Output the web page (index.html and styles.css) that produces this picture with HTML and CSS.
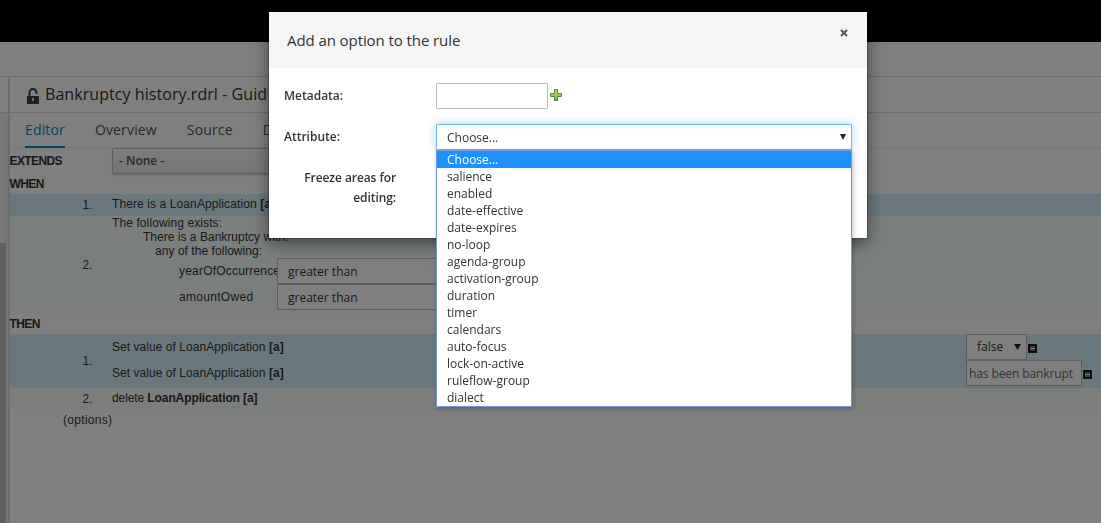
FILE: index.html
```html
<!DOCTYPE html>
<html lang="en">
<head>
<meta charset="utf-8">
<title>Guided rule editor</title>
<link rel="stylesheet" href="styles.css">
</head>
<body>
<div class="app">
  <header class="topbar"></header>
  <div class="toolbar"></div>
  <div class="workspace">
    <aside class="sidebar">
      <div class="side-head"><svg class="side-arrow" width="4" height="4" viewBox="0 0 4 4"><path d="M0 0L4 4H0z" fill="#222"/></svg></div>
      <div class="track"><div class="thumb"></div></div>
    </aside>
    <main class="main">
      <div class="doc-title">
        <svg class="lock" width="12" height="16" viewBox="0 0 12 16"><path d="M2.500 8V4.500a3.500 3.500 0 0 1 7 0V6" fill="none" stroke="#404040" stroke-width="2"/><path d="M0 8h12v8H0z" fill="#404040"/><path d="M5 10h2v3H5z" fill="#ddd"/></svg>
        <span class="doc-name">Bankruptcy history.rdrl - Guid</span>
      </div>
      <nav class="tabs"><span class="tab active">Editor</span><span class="tab">Overview</span><span class="tab">Source</span><span class="tab">D</span></nav>
      <div class="extends"><b class="section">EXTENDS</b><div class="select none">- None -</div></div>
      <div class="section when">WHEN</div>
      <div class="row blue one"><span class="num">1.</span><span class="text">There is a LoanApplication <b>[a]</b></span></div>
      <div class="row mint exists">
        <span class="num">2.</span>
        <div class="conditions">
          <div class="line">The following exists:</div>
          <div class="line in1">There is a Bankruptcy with:</div>
          <div class="line in2">any of the following:</div>
          <div class="cond"><span class="field year">yearOfOccurrence</span><div class="select op">greater than</div></div>
          <div class="cond"><span class="field">amountOwed</span><div class="select op">greater than</div></div>
        </div>
      </div>
      <div class="section then">THEN</div>
      <div class="row blue actions">
        <span class="num">1.</span>
        <div class="action-list">
          <div class="action"><span class="text">Set value of LoanApplication <b>[a]</b></span><div class="select bool">false<svg class="caret" width="7" height="6" viewBox="0 0 7 6"><path d="M0 0h7L3.500 6z" fill="#222"/></svg></div><i class="minus"></i></div>
          <div class="action"><span class="text">Set value of LoanApplication <b>[a]</b></span><div class="value">has been bankrupt</div><i class="minus"></i></div>
        </div>
      </div>
      <div class="row mint one"><span class="num">2.</span><span class="text del">delete <b>LoanApplication [a]</b></span></div>
      <div class="options">(options)</div>
    </main>
  </div>
</div>
<div class="backdrop"></div>
<section class="modal">
  <header class="modal-head"><h4 class="modal-title">Add an option to the rule</h4><svg class="close" width="8" height="8" viewBox="0 0 8 8"><path d="M1 1l6 6M7 1L1 7" stroke="#555" stroke-width="2"/></svg></header>
  <div class="modal-body">
    <div class="form-row"><label class="label">Metadata:</label><div class="input"></div>
      <svg class="plus" width="12" height="12" viewBox="0 0 12 12"><defs><linearGradient id="g" x2="0" y2="1"><stop stop-color="#d5df55"/><stop offset="1" stop-color="#7bae35"/></linearGradient></defs><path d="M4.500.5h3v4h4v3h-4v4h-3v-4h-4v-3h4z" fill="url(#g)" stroke="#438e4b"/></svg>
    </div>
    <div class="form-row"><label class="label">Attribute:</label>
      <div class="attribute"><span class="chosen">Choose...</span><svg class="caret" width="6" height="6" viewBox="0 0 6 6"><path d="M0 0h6L3 6z" fill="#222"/></svg>
        <div class="menu">
          <div class="item selected">Choose...</div><div class="item">salience</div><div class="item">enabled</div><div class="item">date-effective</div><div class="item">date-expires</div><div class="item">no-loop</div><div class="item">agenda-group</div><div class="item">activation-group</div><div class="item">duration</div><div class="item">timer</div><div class="item">calendars</div><div class="item">auto-focus</div><div class="item">lock-on-active</div><div class="item">ruleflow-group</div><div class="item">dialect</div>
        </div>
      </div>
    </div>
    <div class="form-row"><label class="label freeze">Freeze areas for editing:</label></div>
  </div>
</section>
</body>
</html>
```
FILE: styles.css
```css
* { box-sizing: border-box; }
body { margin: 0; background: #fff; color: #333; font: 12px/20px "Open Sans", sans-serif; overflow: hidden; }
.app { height: 523px; display: flex; flex-direction: column; }
.topbar { flex: none; height: 42px; background: #030303; }
.toolbar { flex: none; height: 35px; border-bottom: 1px solid #dcdcdc; }
.workspace { flex: 1; min-height: 0; display: flex; }
.sidebar { width: 10px; border-right: 2px solid #d8d8d8; display: flex; flex-direction: column; }
.side-head { flex: none; height: 36px; border-bottom: 1px solid #dcdcdc; }
.side-arrow { display: block; margin-top: 42px; }
.track { flex: 1; padding-top: 130px; background: #efefef; border-right: 2px solid #e8e8e8; }
.thumb { height: 280px; background: #c1c1c1; }
.main { flex: 1; min-width: 0; }
.doc-title { height: 36px; padding: 0 15px 0 17px; display: flex; align-items: center; border-bottom: 1px solid #dcdcdc; }
.lock { margin: 3px 6px 0 0; }
.doc-name { margin-top: -2px; font-size: 16px; letter-spacing: .06px; white-space: nowrap; }
.tabs { height: 35px; padding-left: 15px; display: flex; gap: 30px; border-bottom: 1px solid #ededed; font-size: 14px; line-height: 34px; letter-spacing: .15px; color: #4d5258; white-space: nowrap; }
.tab { height: 35px; }
.active { color: #0088ce; border-bottom: 2px solid #0088ce; }
.extends { height: 26px; display: flex; align-items: center; }
.section { font: bold 12px/20px "Liberation Sans", sans-serif; letter-spacing: -.6px; text-indent: -.5px; }
.extends .section { width: 102px; }
.select { height: 26px; border: 1px solid #bbb; border-radius: 1px; background: #fff; padding: 0 10px; line-height: 26px; }
.none { width: 400px; padding-left: 6px; font-weight: 600; line-height: 24px; color: #4d5258; background: linear-gradient(#fafafa, #ededed); box-shadow: 0 2px 3px rgba(3,3,3,.1); }
.when { height: 20px; }
.row { display: flex; align-items: center; font: 12px/14px "Liberation Sans", sans-serif; letter-spacing: .1px; }
.blue { background: #d5f0fb; }
.mint { background: #f5fffd; }
.num { width: 83px; text-align: right; margin-right: 19px; letter-spacing: .3px; }
.one { height: 22px; }
.one .text { margin-top: -2px; }
.one .del { letter-spacing: -.1px; }
.exists { height: 98px; }
.conditions { height: 98px; }
.line { height: 14px; white-space: nowrap; }
.in1 { padding-left: 31px; letter-spacing: .02px; }
.in2 { padding-left: 43px; letter-spacing: .05px; }
.cond { height: 26px; display: flex; }
.field { width: 165px; padding: 6px 0 0 67px; letter-spacing: .3px; }
.year { letter-spacing: .2px; }
.op { width: 300px; font: 12px/26px "Open Sans", sans-serif; letter-spacing: 0; }
.then { height: 20px; }
.actions { height: 54px; }
.action-list { height: 54px; }
.action { height: 26px; display: flex; align-items: center; }
.action .text { width: 854px; letter-spacing: .05px; }
.bool { width: 61px; display: flex; align-items: center; justify-content: space-between; padding-right: 5px; font: 12px/26px "Open Sans", sans-serif; letter-spacing: 0; }
.value { width: 116px; height: 26px; border: 1px solid #bbb; padding-left: 2px; background: #fff; color: #666; font: 12px/26px "Open Sans", sans-serif; letter-spacing: -.1px; }
.minus { width: 7px; height: 7px; margin: 3px 0 0 2px; border: 1px solid #000; background: linear-gradient(#777 2px, #fff 2px, #fff 3px, #777 3px); outline: .5px solid #222; }
.options { padding: 0 0 0 53px; font: 12px/20px "Liberation Sans", sans-serif; letter-spacing: .3px; }
.backdrop { position: fixed; inset: 0; background: rgba(0,0,0,.5); }
.modal { position: absolute; left: 269px; top: 12px; width: 598px; height: 226px; background: #fff; box-shadow: 0 5px 15px rgba(0,0,0,.5), 0 0 0 1px rgba(0,0,0,.2); }
.modal-head { height: 56px; padding: 0 19px 0 18px; background: #f5f5f5; display: flex; justify-content: space-between; }
.modal-title { margin: 0; font-size: 15px; font-weight: 400; line-height: 57px; letter-spacing: -.08px; }
.close { margin-top: 17px; }
.modal-body { padding: 15px; display: flex; flex-direction: column; gap: 15px; }
.form-row { height: 26px; display: flex; }
.label { width: 152px; font-weight: 600; line-height: 25px; }
.input { width: 112px; height: 26px; border: 1px solid #bbb; border-radius: 1px; }
.plus { margin: 6px 0 0 2px; }
.attribute { position: relative; width: 416px; height: 26px; padding: 0 5px 0 10px; display: flex; align-items: center; justify-content: space-between; border: 1px solid #66b9e8; border-radius: 1px; line-height: 24px; box-shadow: 0 0 8px rgba(102,175,233,.6); }
.chosen { padding-top: 2px; }
.menu { position: absolute; left: -1px; top: 25px; width: 416px; height: 257px; border: 1px solid #7398dc; background: #fff; box-shadow: 1px 2px 5px rgba(0,0,0,.25); }
.item { height: 17px; padding-left: 10px; line-height: 17px; }
.selected { background: #1e90ff; color: #fff; }
.freeze { width: 112px; text-align: right; line-height: 20px; padding-top: 3px; letter-spacing: -.08px; }
```
